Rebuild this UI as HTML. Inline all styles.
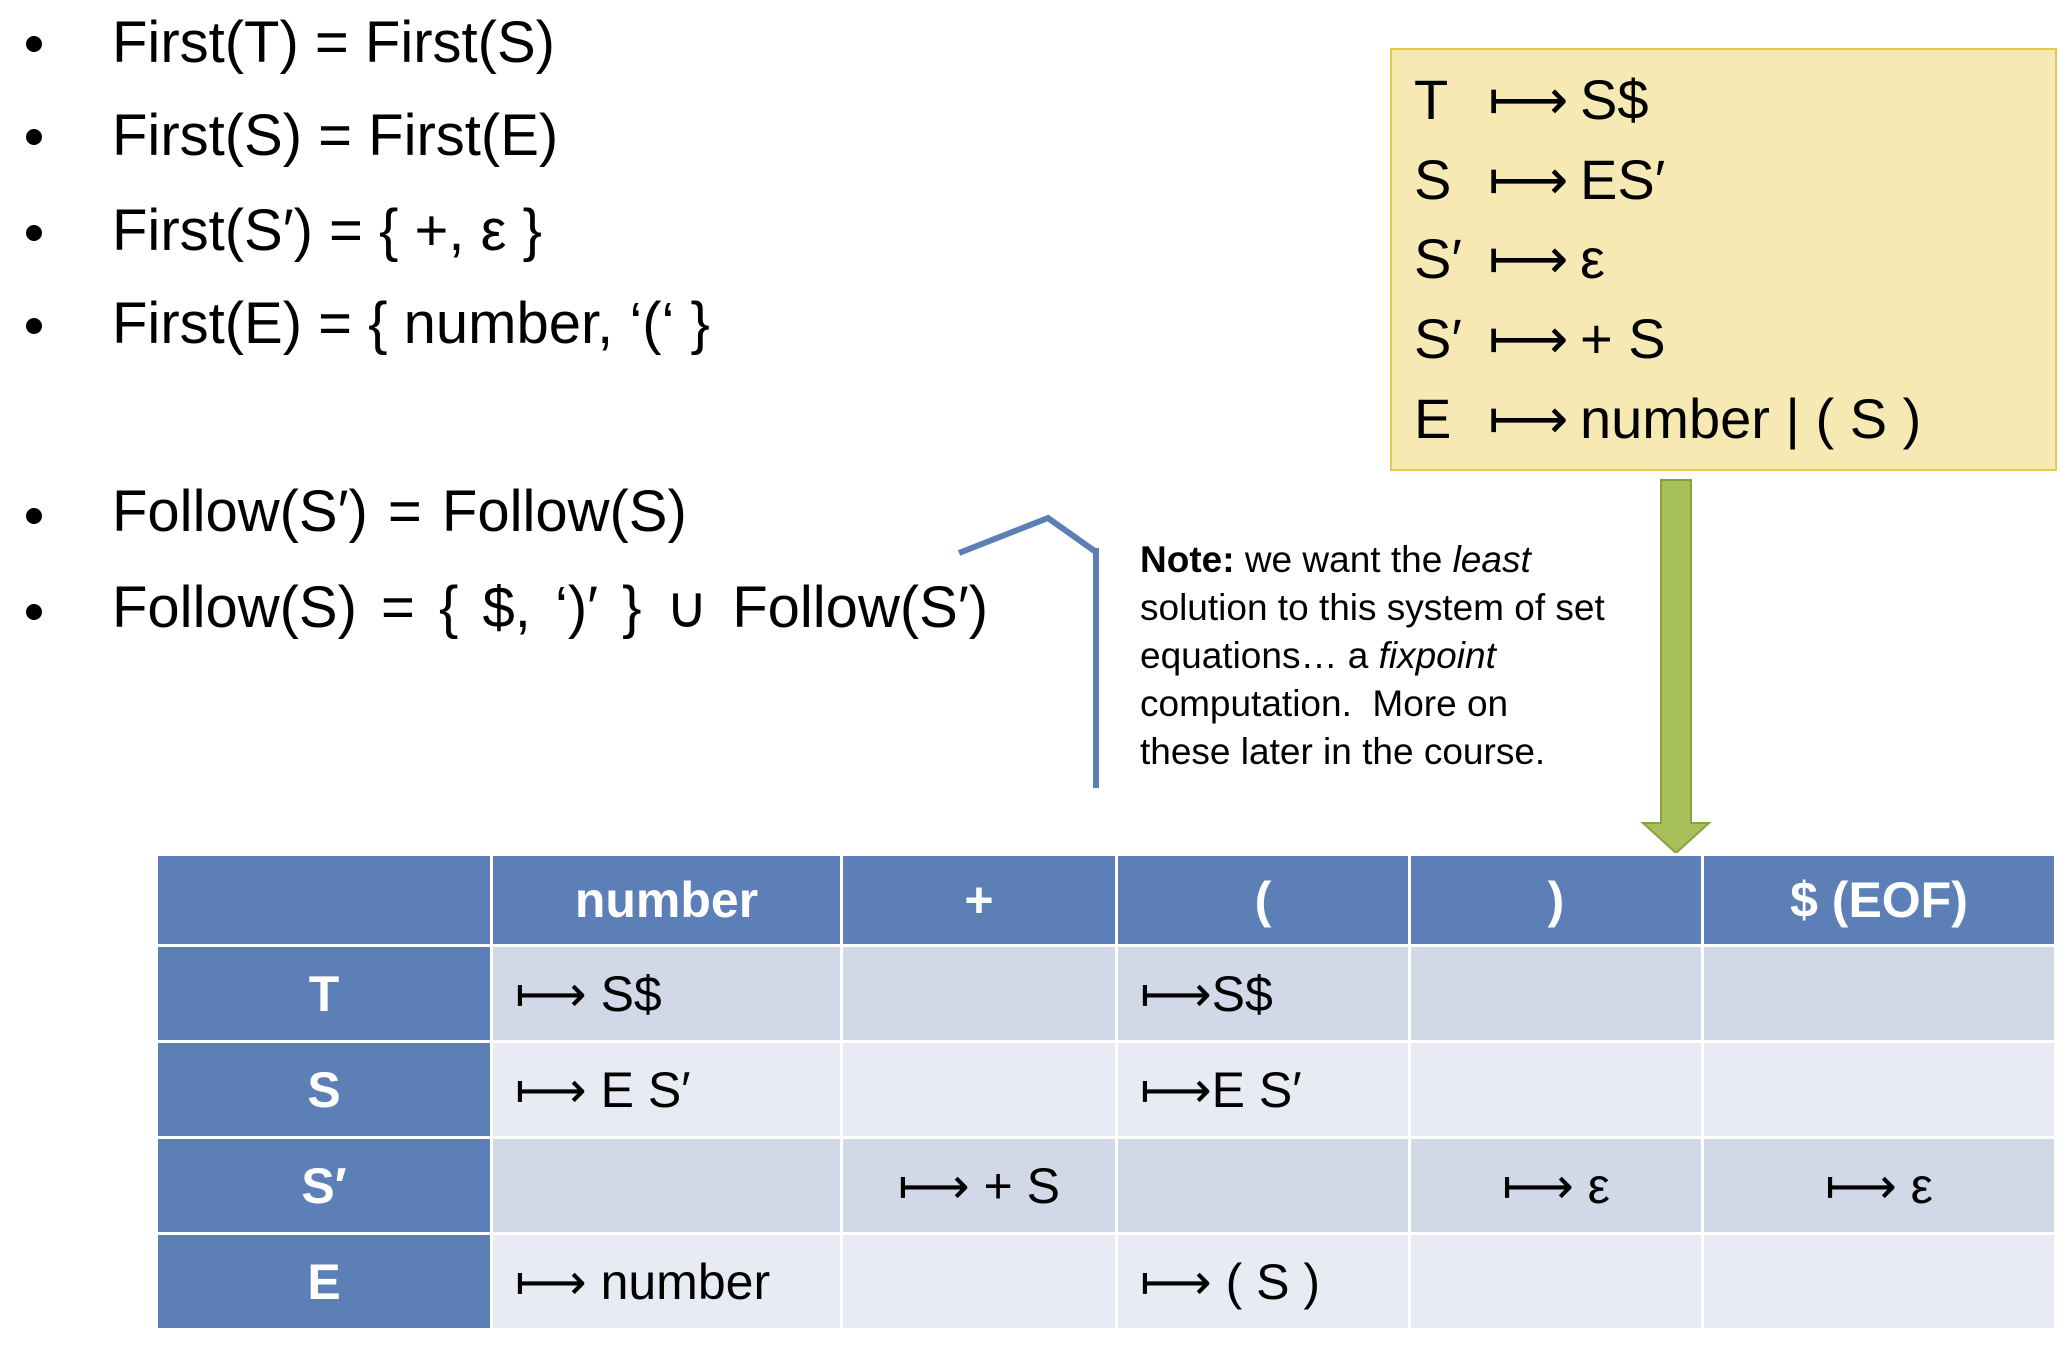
<!DOCTYPE html>
<html><head><meta charset="utf-8"><style>
body{margin:0;width:2072px;height:1352px;background:#fff;position:relative;overflow:hidden;font-family:"Liberation Sans","DejaVu Sans",sans-serif;color:#000}
.a{position:absolute;white-space:nowrap}
.b{font-size:58px;line-height:70px}
.dot{position:absolute;left:26px;width:16px;height:16px;border-radius:50%;background:#000}
.g{font-size:56px;line-height:70px;left:1414px}
.g span{position:absolute}
.note{left:1140px;top:536px;font-size:37px;line-height:48px}
table{position:absolute;left:155px;top:853px;border-collapse:collapse}
td{border:3px solid #fff;padding:0;height:93px;font-size:50px}
tr.h td{background:#5b7fb6;color:#fff;font-weight:bold;text-align:center;height:88px}
td.rh{background:#5b7fb6;color:#fff;font-weight:bold;text-align:center}
tr.o td.c{background:#d1d8e7}
tr.e td.c{background:#e8ebf3}
td.c{padding-left:22px}
td.ctr{text-align:center;padding-left:0}
</style></head><body>
<div class="dot" style="top:36px"></div><div class="a b" style="left:112px;top:8px">First(T) = First(S)</div>
<div class="dot" style="top:129px"></div><div class="a b" style="left:112px;top:101px">First(S) = First(E)</div>
<div class="dot" style="top:225px"></div><div class="a b" style="left:112px;top:196px">First(S′) = { +, ε }</div>
<div class="dot" style="top:318px"></div><div class="a b" style="left:112px;top:289px">First(E) = { number, ‘(‘ }</div>
<div class="dot" style="top:508px"></div><div class="a b" style="left:112px;top:477px;word-spacing:4px">Follow(S′) = Follow(S)</div>
<div class="dot" style="top:604px"></div><div class="a b" style="left:112px;top:573px;word-spacing:8px">Follow(S) = { $, ‘)′ } ∪ Follow(S′)</div>

<div class="a" style="left:1390px;top:48px;width:663px;height:419px;background:#f6e9b4;border:2px solid #e8c84a"></div>
<div class="a g" style="top:65px;width:600px;height:400px">
<span style="left:0;top:0">T</span><span style="left:74px;top:0">⟼</span><span style="left:166px;top:0">S$</span>
<span style="left:0;top:80px">S</span><span style="left:74px;top:80px">⟼</span><span style="left:166px;top:80px">ES′</span>
<span style="left:0;top:159px">S′</span><span style="left:74px;top:159px">⟼</span><span style="left:166px;top:159px">ε</span>
<span style="left:0;top:239px">S′</span><span style="left:74px;top:239px">⟼</span><span style="left:166px;top:239px">+ S</span>
<span style="left:0;top:319px">E</span><span style="left:74px;top:319px">⟼</span><span style="left:166px;top:319px">number | ( S )</span>
</div>

<svg class="a" style="left:0;top:0" width="2072" height="1352">
<polyline points="959,553 1048,518 1096,552" fill="none" stroke="#5b7fb6" stroke-width="6"/>
<line x1="1096" y1="548" x2="1096" y2="788" stroke="#5b7fb6" stroke-width="6"/>
<polygon points="1661,480 1691,480 1691,823 1709,823 1676,853 1643,823 1661,823" fill="#a8c05a" stroke="#8aa23e" stroke-width="2"/>
</svg>

<div class="a note"><b>Note:</b> we want the <i>least</i><br>solution to this system of set<br>equations… a <i>fixpoint</i><br>computation.&nbsp; More on<br>these later in the course.</div>

<table>
<tr class="h"><td style="width:332px"></td><td style="width:347px">number</td><td style="width:272px">+</td><td style="width:290px">(</td><td style="width:290px">)</td><td style="width:350px">$ (EOF)</td></tr>
<tr class="o"><td class="rh">T</td><td class="c">⟼ S$</td><td class="c"></td><td class="c">⟼S$</td><td class="c"></td><td class="c"></td></tr>
<tr class="e"><td class="rh">S</td><td class="c">⟼ E S′</td><td class="c"></td><td class="c">⟼E S′</td><td class="c"></td><td class="c"></td></tr>
<tr class="o"><td class="rh">S′</td><td class="c"></td><td class="c ctr">⟼ + S</td><td class="c"></td><td class="c ctr">⟼ ε</td><td class="c ctr">⟼ ε</td></tr>
<tr class="e"><td class="rh">E</td><td class="c">⟼ number</td><td class="c"></td><td class="c">⟼ ( S )</td><td class="c"></td><td class="c"></td></tr>
</table>
</body></html>
